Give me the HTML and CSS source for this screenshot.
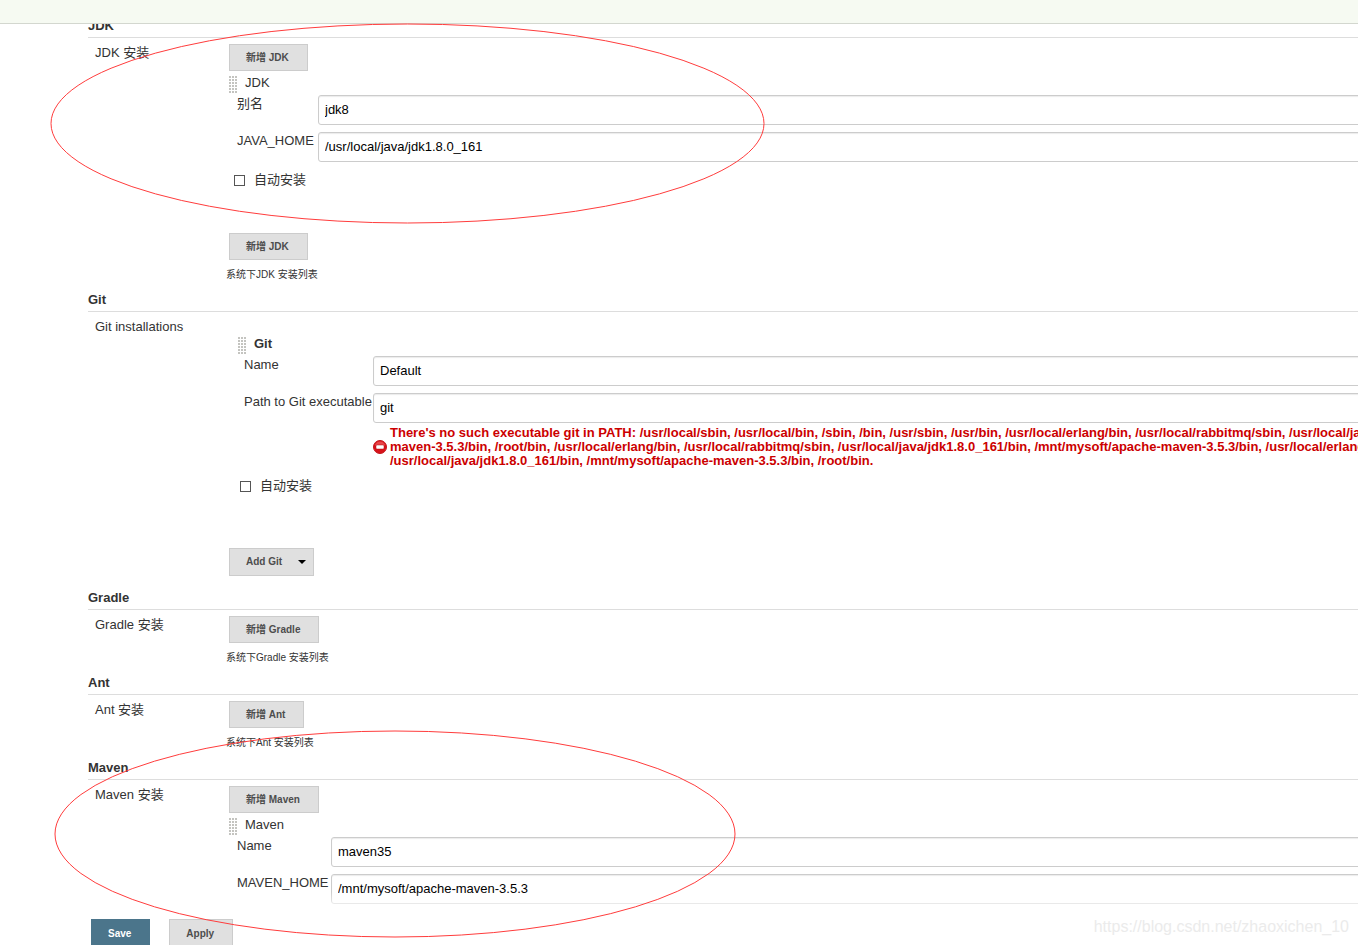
FILE: index.html
```html
<!DOCTYPE html>
<html lang="zh-CN">
<head>
<meta charset="utf-8">
<title>Global Tool Configuration</title>
<link rel="stylesheet" href="styles.css">
</head>
<body class="page">
<header class="topbar"></header>
<form class="config">
  <section>
    <h2 class="section-title">JDK</h2>
    <div class="section-row">
      <div class="section-label">JDK 安装</div>
      <div class="section-content">
        <button type="button" class="btn">新增 JDK</button>
        <div class="tool">
          <div class="tool-title"><span class="drag-handle"></span>JDK</div>
          <div class="fields fields-jdk">
            <label class="field-label" for="jdk-name">别名</label>
            <input class="text-input" id="jdk-name" type="text" value="jdk8">
            <label class="field-label" for="java-home">JAVA_HOME</label>
            <input class="text-input" id="java-home" type="text" value="/usr/local/java/jdk1.8.0_161">
          </div>
          <label class="auto-install"><input class="check" type="checkbox">自动安装</label>
        </div>
        <button type="button" class="btn">新增 JDK</button>
        <p class="hint">系统下JDK 安装列表</p>
      </div>
    </div>
  </section>

  <section>
    <h2 class="section-title">Git</h2>
    <div class="section-row">
      <div class="section-label">Git installations</div>
      <div class="section-content section-content-tall">
        <div class="tool tool-nested">
          <div class="tool-title tool-title-strong"><span class="drag-handle"></span>Git</div>
          <div class="fields fields-git">
            <label class="field-label" for="git-name">Name</label>
            <input class="text-input" id="git-name" type="text" value="Default">
            <label class="field-label" for="git-path">Path to Git executable</label>
            <div>
              <input class="text-input" id="git-path" type="text" value="git">
              <div class="error">
                <svg class="error-icon" viewBox="0 0 14 14" aria-hidden="true">
                  <circle cx="7" cy="7" r="6.5" fill="#d8121a" stroke="#c2161b"/>
                  <path d="M2 5.500a5 4 0 0 1 10 0z" fill="#e8474b"/>
                  <rect x="3" y="5" width="8" height="4" rx="1" fill="#fff" stroke="#b50d12" stroke-width=".5"/>
                </svg>
                <p class="error-text">There's no such executable git in PATH: /usr/local/sbin, /usr/local/bin, /sbin, /bin, /usr/sbin, /usr/bin, /usr/local/erlang/bin, /usr/local/rabbitmq/sbin, /usr/local/java<br>maven-3.5.3/bin, /root/bin, /usr/local/erlang/bin, /usr/local/rabbitmq/sbin, /usr/local/java/jdk1.8.0_161/bin, /mnt/mysoft/apache-maven-3.5.3/bin, /usr/local/erlang/b<br>/usr/local/java/jdk1.8.0_161/bin, /mnt/mysoft/apache-maven-3.5.3/bin, /root/bin.</p>
              </div>
            </div>
          </div>
          <label class="auto-install"><input class="check" type="checkbox">自动安装</label>
        </div>
        <button type="button" class="btn btn-menu">Add Git<span class="caret"></span></button>
      </div>
    </div>
  </section>

  <section>
    <h2 class="section-title">Gradle</h2>
    <div class="section-row">
      <div class="section-label">Gradle 安装</div>
      <div class="section-content">
        <button type="button" class="btn">新增 Gradle</button>
        <p class="hint">系统下Gradle 安装列表</p>
      </div>
    </div>
  </section>

  <section>
    <h2 class="section-title">Ant</h2>
    <div class="section-row">
      <div class="section-label">Ant 安装</div>
      <div class="section-content">
        <button type="button" class="btn">新增 Ant</button>
        <p class="hint">系统下Ant 安装列表</p>
      </div>
    </div>
  </section>

  <section>
    <h2 class="section-title">Maven</h2>
    <div class="section-row">
      <div class="section-label">Maven 安装</div>
      <div class="section-content">
        <button type="button" class="btn">新增 Maven</button>
        <div class="tool-title"><span class="drag-handle"></span>Maven</div>
        <div class="fields fields-maven">
          <label class="field-label" for="maven-name">Name</label>
          <input class="text-input" id="maven-name" type="text" value="maven35">
          <label class="field-label" for="maven-home">MAVEN_HOME</label>
          <input class="text-input" id="maven-home" type="text" value="/mnt/mysoft/apache-maven-3.5.3">
        </div>
      </div>
    </div>
  </section>

  <div class="actions">
    <button type="submit" class="btn btn-primary">Save</button>
    <button type="button" class="btn">Apply</button>
  </div>
</form>
<svg class="annotations" aria-hidden="true">
  <ellipse cx="407.5" cy="123.500" rx="356.500" ry="99.500"/>
  <ellipse cx="395" cy="834" rx="340" ry="103"/>
</svg>
<div class="watermark">https://blog.csdn.net/zhaoxichen_10</div>
</body>
</html>
```
FILE: styles.css
```css
* {
  box-sizing: border-box;
}

.page {
  margin: 0;
  height: 100vh;
  overflow: hidden;
  position: relative;
  background: #fff;
  color: #333;
  font: 13px/16px "Liberation Sans", "Noto Sans CJK SC", sans-serif;
}

.topbar {
  position: relative;
  z-index: 1;
  height: 24px;
  background: #f6faf2;
  border-bottom: 1px solid #d3d7cf;
}

/* The form scrolls beneath the top bar and runs past the right edge. */
.config {
  margin: -10px -24px 0 88px;
}

.section-title {
  margin: 0;
  height: 24px;
  padding-top: 4px;
  border-bottom: 1px solid #ddd;
  font-size: 13px;
  line-height: 16px;
}

.section-row {
  display: grid;
  grid-template-columns: 138px 1fr;
}

.section-label {
  padding: 7px 0 0 7px;
}

.section-content {
  padding: 6px 0;
}

.section-content-tall {
  padding-bottom: 10px;
}

.btn {
  display: inline-flex;
  align-items: center;
  height: 27px;
  margin: 0 0 0 3px;
  padding: 0 18px 0 16px;
  border: 1px solid #ccc;
  border-radius: 0;
  background: #e0e0e0;
  color: #4d4d4d;
  font: bold 10px/14px "Liberation Sans", "Noto Sans CJK SC", sans-serif;
  vertical-align: top;
}

.btn-menu {
  height: 28px;
  gap: 16px;
  padding-right: 7px;
}

.caret {
  border: 4px solid transparent;
  border-top-color: #000;
  border-bottom: 0;
}

.btn-primary {
  background: #4b758b;
  border-color: #4b758b;
  color: #fff;
}

.hint {
  margin: 8px 0 0;
  font-size: 10px;
  line-height: 14px;
}

.tool {
  margin-bottom: 45px;
}

.tool-nested {
  margin-bottom: 54px;
  padding: 14px 0 0 7px;
}

.tool-title {
  display: flex;
  gap: 7px;
  height: 24px;
  padding: 4px 0 0 3px;
}

.tool-nested .tool-title {
  padding-left: 5px;
}

.tool-title-strong {
  font-weight: bold;
}

.drag-handle {
  width: 9px;
  height: 17px;
  margin-top: 1px;
  background:
    repeating-linear-gradient(90deg, transparent 0 2px, #fff 2px 3px),
    repeating-linear-gradient(#c4c4c0 0 2px, #fff 2px 3px);
}

.fields {
  display: grid;
  row-gap: 7px;
  padding-left: 11px;
}

.fields-jdk {
  grid-template-columns: 81px 1fr;
}

.fields-git {
  grid-template-columns: 129px 1fr;
}

.fields-maven {
  grid-template-columns: 94px 1fr;
}

.field-label {
  padding-top: 1px;
  white-space: nowrap;
}

.text-input {
  display: block;
  width: 100%;
  height: 30px;
  padding: 0 6px 1px;
  border: 1px solid #ccc;
  border-radius: 3px;
  box-shadow: inset 0 1px 1px rgba(0, 0, 0, 0.08);
  background: #fff;
  color: #000;
  font: 13px/16px "Liberation Sans", "Noto Sans CJK SC", sans-serif;
}

.error {
  display: flex;
  align-items: center;
  gap: 3px;
  padding-top: 3px;
  color: #c00;
}

.error-icon {
  flex: none;
  width: 14px;
  height: 14px;
}

.error-text {
  margin: 0;
  font-weight: bold;
  line-height: 14px;
  white-space: nowrap;
}

.auto-install {
  display: flex;
  align-items: center;
  gap: 9px;
  margin-top: 10px;
  padding-left: 8px;
}

.tool-nested .auto-install {
  padding-left: 7px;
}

.check {
  appearance: none;
  width: 11px;
  height: 11px;
  margin: 0;
  border: 1px solid #555;
  background: #fff;
}

/* Save bar: a white fade covers the last fields above it. */
.actions {
  display: flex;
  gap: 16px;
  position: relative;
  padding-top: 9px;
}

.actions::before {
  content: "";
  position: absolute;
  inset: -18px 0 100% 0;
  background: linear-gradient(rgba(255, 255, 255, 0), rgba(255, 255, 255, 0.9));
}

.actions .btn {
  position: relative;
  height: 30px;
}

.annotations {
  position: absolute;
  inset: 0;
  z-index: 2;
  width: 100%;
  height: 100%;
  fill: none;
  stroke: #ff3c3c;
  pointer-events: none;
}

.watermark {
  position: absolute;
  right: 9px;
  bottom: 8px;
  z-index: 3;
  color: #ebebeb;
  font-size: 16px;
  line-height: 20px;
}
```
